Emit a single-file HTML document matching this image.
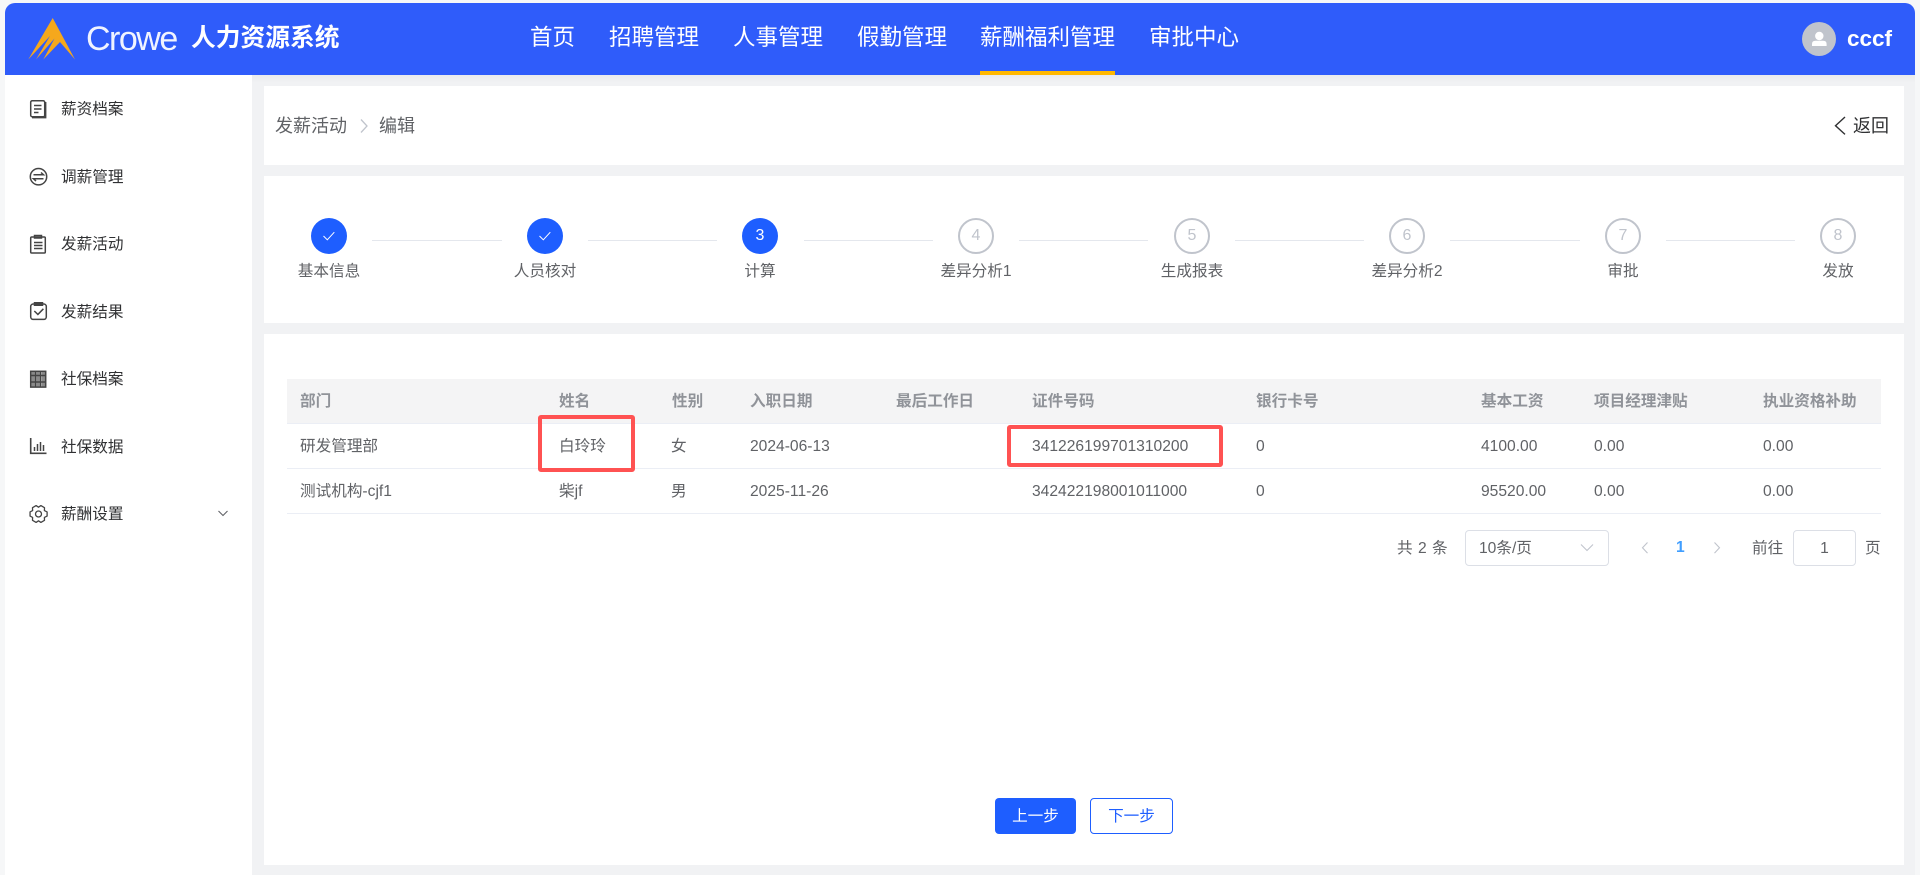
<!DOCTYPE html>
<html lang="zh-CN">
<head>
<meta charset="utf-8">
<title>发薪活动</title>
<style>
html,body{margin:0;padding:0;width:1920px;height:875px;overflow:hidden;background:#f6f7f8;font-family:"Liberation Sans","Noto Sans CJK SC",sans-serif;color:#606266}
.a{position:absolute}
.t{position:absolute;white-space:nowrap;line-height:20px;font-size:15.625px}
.w{background:#fff}
.nav{position:absolute;top:23px;line-height:30px;font-size:22.5px;color:#fff;white-space:nowrap}
.side{position:absolute;left:61px;color:#303133;white-space:nowrap;line-height:20px;font-size:15.625px}
.c{position:absolute;top:218px;width:36px;height:36px;border-radius:50%;box-sizing:border-box;text-align:center;line-height:36px;font-size:16px}
.on{background:#1e5eff;color:#fff}
.off{border:2px solid #c0c4cc;color:#c0c4cc;line-height:32px;background:#fff}
.l{position:absolute;top:240px;height:1px;background:#e4e7ed}
.s{position:absolute;top:262px;width:160px;text-align:center;line-height:20px;font-size:15.625px;color:#606266;white-space:nowrap}
.h{position:absolute;top:392px;line-height:20px;font-size:15.625px;color:#909399;font-weight:700;white-space:nowrap}
.r1,.r2{position:absolute;line-height:20px;font-size:15.625px;color:#606266;white-space:nowrap}
.r1{top:437px}.r2{top:482px}
.b{position:absolute;left:287px;width:1594px;height:1px;background:#ebeef5}
.red{position:absolute;box-sizing:border-box;border:4.5px solid #ff5252;border-radius:3px}
</style>
</head>
<body>
<!-- frame -->
<div class="a" style="left:252px;top:75px;width:1663px;height:800px;background:#f1f2f4"></div>
<div class="a" style="left:5px;top:75px;width:247px;height:800px;background:#fff"></div>
<div class="a" style="left:5px;top:3px;width:1910px;height:72px;background:#2f5cfa;border-radius:10px 10px 0 0"></div>
<div class="a" style="left:252px;top:75px;width:1663px;height:8px;background:linear-gradient(#e9eaec,#f1f2f4)"></div>

<!-- logo and title -->
<div class="t" style="left:86px;top:19px;line-height:40px;font-size:34px;color:rgba(255,255,255,.93);letter-spacing:-1.5px">Crowe</div>
<div class="t" style="left:191px;top:21px;line-height:36px;font-size:24.75px;font-weight:700;color:#fff">人力资源系统</div>

<!-- nav -->
<div class="nav" style="left:530px">首页</div>
<div class="nav" style="left:609px">招聘管理</div>
<div class="nav" style="left:733px">人事管理</div>
<div class="nav" style="left:857px">假勤管理</div>
<div class="nav" style="left:980px">薪酬福利管理</div>
<div class="nav" style="left:1149px">审批中心</div>
<div class="a" style="left:980px;top:71px;width:135px;height:4px;background:#ffb800"></div>

<!-- user -->
<div class="a" style="left:1802px;top:22px;width:34px;height:34px;border-radius:50%;background:#c0c4cc"></div>
<div class="t" style="left:1847px;top:24px;line-height:30px;font-size:22.5px;font-weight:700;color:#fff">cccf</div>

<!-- sidebar -->
<div class="side" style="top:100px">薪资档案</div>
<div class="side" style="top:168px">调薪管理</div>
<div class="side" style="top:235px">发薪活动</div>
<div class="side" style="top:303px">发薪结果</div>
<div class="side" style="top:370px">社保档案</div>
<div class="side" style="top:438px">社保数据</div>
<div class="side" style="top:505px">薪酬设置</div>

<!-- cards -->
<div class="a w" style="left:264px;top:86px;width:1640px;height:79px"></div>
<div class="a w" style="left:264px;top:176px;width:1640px;height:147px"></div>
<div class="a w" style="left:264px;top:334px;width:1640px;height:531px"></div>

<!-- breadcrumb -->
<div class="t" style="left:275px;top:114px;line-height:24px;font-size:18px;color:#606266">发薪活动</div>
<div class="t" style="left:379px;top:114px;line-height:24px;font-size:18px;color:#606266">编辑</div>
<div class="t" style="left:1853px;top:114px;line-height:24px;font-size:18px;color:#303133">返回</div>

<!-- steps -->
<div class="c on" style="left:311px"></div>
<div class="c on" style="left:527px"></div>
<div class="c on" style="left:742px">3</div>
<div class="c off" style="left:958px">4</div>
<div class="c off" style="left:1174px">5</div>
<div class="c off" style="left:1389px">6</div>
<div class="c off" style="left:1605px">7</div>
<div class="c off" style="left:1820px">8</div>
<div class="l" style="left:372px;width:130px"></div>
<div class="l" style="left:588px;width:129px"></div>
<div class="l" style="left:804px;width:129px"></div>
<div class="l" style="left:1019px;width:129px"></div>
<div class="l" style="left:1235px;width:129px"></div>
<div class="l" style="left:1450px;width:130px"></div>
<div class="l" style="left:1666px;width:129px"></div>
<div class="s" style="left:249px">基本信息</div>
<div class="s" style="left:465px">人员核对</div>
<div class="s" style="left:680px">计算</div>
<div class="s" style="left:896px">差异分析1</div>
<div class="s" style="left:1112px">生成报表</div>
<div class="s" style="left:1327px">差异分析2</div>
<div class="s" style="left:1543px">审批</div>
<div class="s" style="left:1758px">发放</div>

<!-- table -->
<div class="a" style="left:287px;top:379px;width:1594px;height:45px;background:#f4f4f5"></div>
<div class="b" style="top:423px"></div>
<div class="b" style="top:468px"></div>
<div class="b" style="top:513px"></div>
<div class="h" style="left:300px">部门</div>
<div class="h" style="left:559px">姓名</div>
<div class="h" style="left:672px">性别</div>
<div class="h" style="left:750px">入职日期</div>
<div class="h" style="left:896px">最后工作日</div>
<div class="h" style="left:1032px">证件号码</div>
<div class="h" style="left:1256px">银行卡号</div>
<div class="h" style="left:1481px">基本工资</div>
<div class="h" style="left:1594px">项目经理津贴</div>
<div class="h" style="left:1763px">执业资格补助</div>

<div class="r1" style="left:300px">研发管理部</div>
<div class="r1" style="left:559px">白玲玲</div>
<div class="r1" style="left:671px">女</div>
<div class="r1" style="left:750px">2024-06-13</div>
<div class="r1" style="left:1032px">341226199701310200</div>
<div class="r1" style="left:1256px">0</div>
<div class="r1" style="left:1481px">4100.00</div>
<div class="r1" style="left:1594px">0.00</div>
<div class="r1" style="left:1763px">0.00</div>

<div class="r2" style="left:300px">测试机构-cjf1</div>
<div class="r2" style="left:559px">柴jf</div>
<div class="r2" style="left:671px">男</div>
<div class="r2" style="left:750px">2025-11-26</div>
<div class="r2" style="left:1032px">342422198001011000</div>
<div class="r2" style="left:1256px">0</div>
<div class="r2" style="left:1481px">95520.00</div>
<div class="r2" style="left:1594px">0.00</div>
<div class="r2" style="left:1763px">0.00</div>

<div class="red" style="left:538px;top:415px;width:97px;height:57px"></div>
<div class="red" style="left:1007px;top:425px;width:216px;height:42px"></div>

<!-- pagination -->
<div class="t" style="left:1397px;top:539px;color:#606266;word-spacing:1px">共 2 条</div>
<div class="a" style="left:1465px;top:530px;width:144px;height:36px;box-sizing:border-box;border:1px solid #dcdfe6;border-radius:4px"></div>
<div class="t" style="left:1479px;top:539px">10条/页</div>
<div class="t" style="left:1676px;top:538px;color:#409eff;font-weight:700">1</div>
<div class="t" style="left:1752px;top:539px">前往</div>
<div class="a" style="left:1793px;top:530px;width:63px;height:36px;box-sizing:border-box;border:1px solid #dcdfe6;border-radius:4px;text-align:center;line-height:35px;font-size:15.625px">1</div>
<div class="t" style="left:1865px;top:539px">页</div>

<!-- buttons -->
<div class="a" style="left:995px;top:798px;width:81px;height:36px;background:#1e5eff;border-radius:4px;color:#fff;text-align:center;line-height:38px;font-size:15.625px">上一步</div>
<div class="a" style="left:1090px;top:798px;width:83px;height:36px;box-sizing:border-box;border:1px solid #1e5eff;border-radius:4px;color:#1e5eff;text-align:center;line-height:36px;font-size:15.625px">下一步</div>

<!-- all vector icons -->
<svg class="a" style="left:0;top:0;pointer-events:none" width="1920" height="875" viewBox="0 0 1920 875" fill="none">
  <!-- logo -->
  <path fill="#f5a81c" d="M52.7 18 L75 59.5 L60 42 L43.3 59.5 L54.5 38.5 L36 59.5 L50 36 L28.3 59.5 Z"/>
  <!-- avatar person -->
  <circle cx="1819.3" cy="36" r="4.2" fill="#fff"/>
  <path d="M1812 46 v-2 q0 -3.2 3.5 -3.2 h7.6 q3.5 0 3.5 3.2 v2 z" fill="#fff"/>
  <!-- sidebar icons -->
  <g stroke="#444" stroke-width="1.5">
    <rect x="30.7" y="100.7" width="14" height="16" rx="1.5"/>
    <path d="M45.5 102 V117.5 H32" stroke-width="1.8"/>
    <path d="M34 105.5h7.5M34 109h7.5M34 112.5h4.5"/>
    <circle cx="38.5" cy="176.7" r="8.2"/>
    <path d="M33.5 174.8h10l-2.5-2.3M43.5 178.8h-10l2.5 2.3"/>
    <rect x="30.7" y="237" width="14.6" height="16" rx="1"/>
    <path d="M34.5 235.5h7v2.5h-7z"/>
    <path d="M34 242.5h8.5M34 245.5h8.5M34 248.5h8.5"/>
    <rect x="30.7" y="304" width="15.6" height="15.4" rx="2.5"/>
    <path d="M34.5 302.7h8v2.6h-8z"/>
    <path d="M34.3 311l3.6 3.4 5.5-5.6"/>
    <path d="M31.5 372h3.5v15h-3.5zM36.7 372h3.5v15h-3.5zM41.9 372h3.5v15h-3.5z" fill="#8a8a8a" stroke="none"/>
    <rect x="30.7" y="371.3" width="15" height="15.8"/>
    <path d="M35.7 371.3v15.8M40.7 371.3v15.8M30.7 375.5h15M30.7 382h15"/>
    <path d="M30.7 438v15.3H46.5" stroke-width="1.6"/>
    <path d="M34.5 451v-4M37.5 451v-7M40.5 451v-9M43.5 451v-6"/>
    <path stroke-linejoin="round" stroke-width="1.3" d="M47.1 511.9 L47.1 516.1 L44.4 517.4 L44.5 520.3 L40.9 522.4 L38.5 520.8 L36.1 522.4 L32.5 520.3 L32.6 517.4 L30.06 516.1 L30.06 511.9 L32.6 510.6 L32.5 507.7 L36.1 505.6 L38.5 507.2 L40.9 505.6 L44.5 507.7 L44.4 510.6 Z"/>
    <circle cx="38.5" cy="514" r="3" stroke-width="1.3"/>
  </g>
  <path d="M218.5 511l4.5 4.5 4.5-4.5" stroke="#606266" stroke-width="1.1"/>
  <!-- breadcrumb chevrons -->
  <path d="M361 119.5l6 6.5-6 6.5" stroke="#c0c4cc" stroke-width="1.3"/>
  <path d="M1845 117l-9.5 8.7 9.5 8.7" stroke="#303133" stroke-width="1.4"/>
  <!-- step checks -->
  <path d="M323.5 236l3.8 3.8 7-7.6" stroke="#fff" stroke-width="1"/>
  <path d="M539.5 236l3.8 3.8 7-7.6" stroke="#fff" stroke-width="1"/>
  <!-- pagination chevrons -->
  <path d="M1581 544.5l6 6 6-6" stroke="#c0c4cc" stroke-width="1.1"/>
  <path d="M1647.5 542.5l-5 5.3 5 5.3" stroke="#c0c4cc" stroke-width="1.1"/>
  <path d="M1714.5 542.5l5 5.3-5 5.3" stroke="#c0c4cc" stroke-width="1.1"/>
</svg>
</body>
</html>
